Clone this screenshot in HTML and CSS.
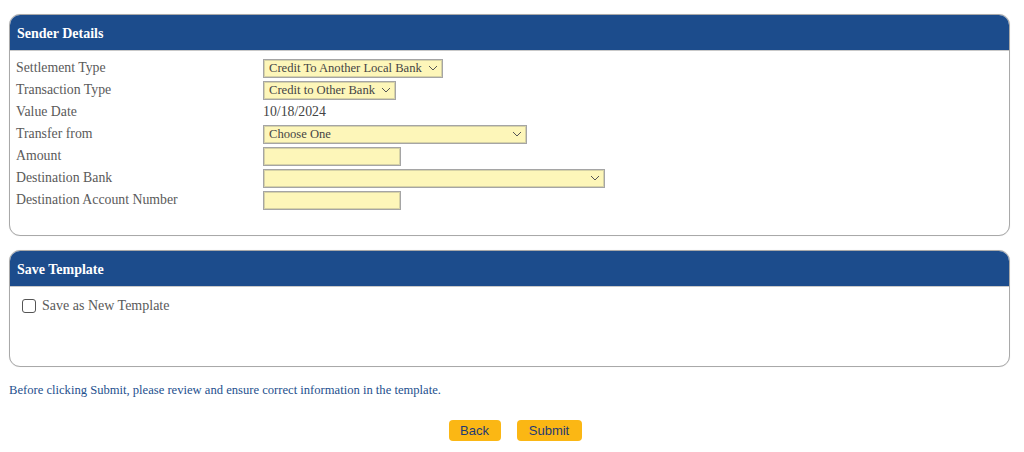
FILE: index.html
```html
<!DOCTYPE html>
<html>
<head>
<meta charset="utf-8">
<link rel="stylesheet" href="styles.css">
</head>
<body>
<div class="page">
  <section class="panel panel-sender">
    <div class="panel-head">Sender Details</div>
    <div class="panel-body form">
      <div class="row"><span class="label">Settlement Type</span>
        <span class="field select w180"><span class="val">Credit To Another Local Bank</span><svg class="chev" viewBox="0 0 10 6"><path d="M1 1l4 4 4-4" fill="none" stroke="#555" stroke-width="1"/></svg></span></div>
      <div class="row"><span class="label">Transaction Type</span>
        <span class="field select w133"><span class="val">Credit to Other Bank</span><svg class="chev" viewBox="0 0 10 6"><path d="M1 1l4 4 4-4" fill="none" stroke="#555" stroke-width="1"/></svg></span></div>
      <div class="row"><span class="label">Value Date</span>
        <span class="plain">10/18/2024</span></div>
      <div class="row"><span class="label">Transfer from</span>
        <span class="field select w264"><span class="val">Choose One</span><svg class="chev" viewBox="0 0 10 6"><path d="M1 1l4 4 4-4" fill="none" stroke="#555" stroke-width="1"/></svg></span></div>
      <div class="row"><span class="label">Amount</span>
        <span class="field w138"></span></div>
      <div class="row"><span class="label">Destination Bank</span>
        <span class="field select w342"><span class="val"></span><svg class="chev" viewBox="0 0 10 6"><path d="M1 1l4 4 4-4" fill="none" stroke="#555" stroke-width="1"/></svg></span></div>
      <div class="row"><span class="label">Destination Account Number</span>
        <span class="field w138"></span></div>
    </div>
  </section>

  <section class="panel panel-template">
    <div class="panel-head">Save Template</div>
    <div class="panel-body">
      <label class="check"><span class="box"></span>Save as New Template</label>
    </div>
  </section>

  <p class="note">Before clicking Submit, please review and ensure correct information in the template.</p>

  <div class="actions">
    <button class="btn btn-back">Back</button>
    <button class="btn btn-submit">Submit</button>
  </div>
</div>
</body>
</html>
```

FILE: styles.css
```css
* { box-sizing: border-box; }
html, body { margin: 0; padding: 0; background: #fff; }
body {
  font-family: "Liberation Serif", "Times New Roman", serif;
  color: #555;
  width: 1024px;
  height: 452px;
  overflow: hidden;
}
.page {
  padding: 14px 14px 0 9px;
}
.panel {
  border: 1px solid #a9a9a9;
  border-radius: 11px;
  overflow: hidden;
  background: #fff;
  box-shadow: 0 0 1px rgba(0,0,0,0.15);
}
.panel-head {
  background: #1c4c8c;
  color: #fff;
  font-weight: bold;
  font-size: 14px;
  height: 36px;
  line-height: 37px;
  padding-left: 7px;
  border-bottom: 1px solid #c9c9c9;
}
.panel-sender .panel-body {
  height: 184px;
  padding: 6px 0 0 6px;
}
.form .row {
  display: flex;
  align-items: center;
  height: 22px;
}
.label {
  width: 247px;
  font-size: 13.8px;
  color: #5a5a5a;
}
.plain {
  font-size: 13.8px;
  color: #444;
}
.field {
  display: flex;
  align-items: center;
  height: 19px;
  background: #fdf6b9;
  border: 1px solid #a5a5a5;
  box-shadow: inset 0 0 0 1px #d6d2a6;
  font-size: 12.6px;
  color: #454545;
  padding: 0 4px 0 5px;
}
.select .val { flex: 1; white-space: nowrap; overflow: hidden; }
.chev { width: 10px; height: 6px; margin-left: 4px; flex: none; }
.w180 { width: 180px; }
.w133 { width: 133px; }
.w264 { width: 264px; }
.w138 { width: 138px; }
.w342 { width: 342px; }

.panel-template { margin-top: 14px; }
.panel-template .panel-body {
  height: 79px;
  padding: 11px 0 0 12px;
}
.check {
  display: flex;
  align-items: center;
  font-size: 14px;
  color: #5a5a5a;
}
.box {
  width: 14px;
  height: 14px;
  border: 1px solid #555;
  border-radius: 3px;
  margin-right: 6px;
  background: #fff;
}
.note {
  margin: 16px 0 0 0;
  font-size: 12.6px;
  color: #24508e;
}
.actions {
  display: flex;
  justify-content: center;
  gap: 16px;
  margin-top: 22px;
  padding-left: 11px;
}
.btn {
  font-family: "Liberation Sans", Arial, sans-serif;
  font-size: 13px;
  color: #1f3a73;
  background: #fbb714;
  border: none;
  border-radius: 4px;
  height: 21px;
  padding: 0;
  line-height: 21px;
}
.btn-back { width: 52px; }
.btn-submit { width: 65px; }
```
